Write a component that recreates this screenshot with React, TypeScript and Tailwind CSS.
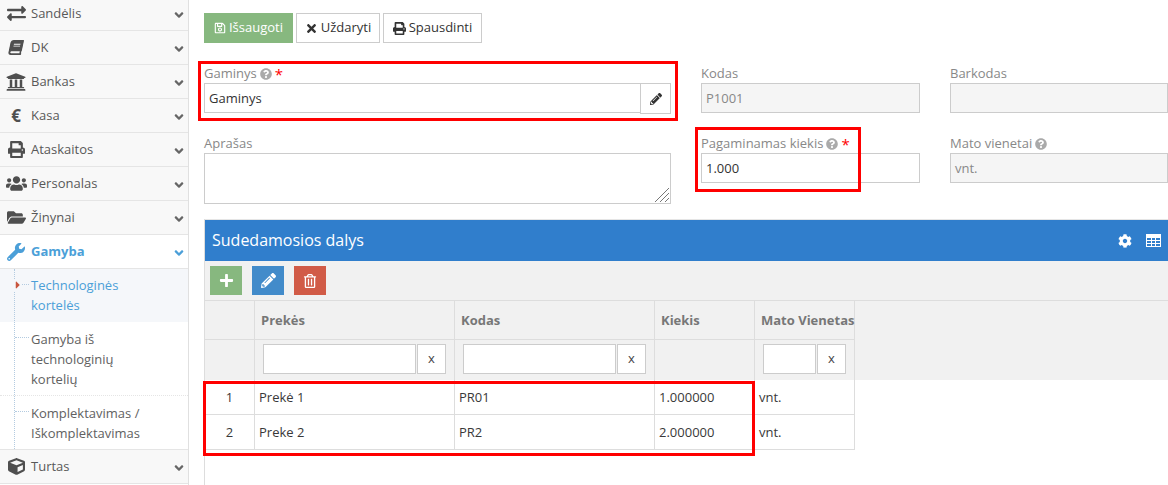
import type { ReactNode } from 'react';
import {
  FaAngleDown,
  FaBook,
  FaCaretRight,
  FaCog,
  FaCube,
  FaExchangeAlt,
  FaFolderOpen,
  FaPencilAlt,
  FaPlus,
  FaPrint,
  FaQuestionCircle,
  FaRegSave,
  FaRegTrashAlt,
  FaTimes,
  FaUniversity,
  FaUsers,
  FaWrench,
} from 'react-icons/fa';

const menuTop = [
  { label: 'Sandėlis', icon: <FaExchangeAlt className="h-[19px] w-[19px]" /> },
  { label: 'DK', icon: <FaBook className="h-[15px] w-[14px] -skew-x-12" /> },
  { label: 'Bankas', icon: <FaUniversity className="h-[20px] w-[20px]" /> },
  { label: 'Kasa', icon: <span className="text-[17px] font-bold leading-[17px]">€</span> },
  { label: 'Ataskaitos', icon: <FaPrint className="h-[17px] w-[17px]" /> },
  { label: 'Personalas', icon: <FaUsers className="h-[21px] w-[21px]" /> },
  { label: 'Žinynai', icon: <FaFolderOpen className="h-[19px] w-[19px]" /> },
];

function MenuItem({ label, icon }: { label: string; icon: ReactNode }) {
  return (
    <div className="flex h-[34px] items-center border-b border-[#e5e5e5] bg-[#f8f8f8] text-[#585858]">
      <div className="flex w-[31px] justify-center pl-px text-[#4f4f4f]">{icon}</div>
      <span className="flex-1">{label}</span>
      <FaAngleDown className="mr-[2px] mt-[2px] h-[14px] w-[14px] text-[#666]" />
    </div>
  );
}

function SubItem({ lines, active }: { lines: string[]; active?: boolean }) {
  return (
    <div
      className={`relative pl-[31px] leading-[20px] ${
        active ? 'bg-[#f5f7fa] pb-[7px] pt-[6px] text-[#4b9fd8]' : 'bg-white pb-[6px] pt-[7px] text-[#616161]'
      }`}
    >
      <span className="absolute left-[15px] top-[15px] w-[14px] border-t border-dotted border-[#b3cbe0]" />
      {active && <FaCaretRight className="absolute left-[14px] top-[10px] z-20 h-[12px] w-[8px] bg-[#f5f7fa] text-[#c8553d]" />}
      {lines.map(line => (
        <div key={line}>{line}</div>
      ))}
    </div>
  );
}

function Sidebar() {
  return (
    <aside className="w-[189px] shrink-0 border-r border-[#e0e0e0] bg-white">
      <div className="-mt-[3px]">
        {menuTop.map(item => (
          <MenuItem key={item.label} {...item} />
        ))}
      </div>
      <div className="flex h-[34px] items-center border-b border-[#e5e5e5] bg-white font-bold text-[#4b9fd8]">
        <div className="flex w-[31px] justify-center pl-px">
          <FaWrench className="h-[18px] w-[18px]" />
        </div>
        <span className="flex-1">Gamyba</span>
        <FaAngleDown className="mr-[2px] mt-[2px] h-[14px] w-[14px]" />
      </div>
      <div className="relative">
        <span className="absolute bottom-0 left-[14px] top-0 z-10 border-l border-dotted border-[#b3cbe0]" />
        <SubItem lines={['Technologinės', 'kortelės']} active />
        <SubItem lines={['Gamyba iš', 'technologinių', 'kortelių']} />
        <div className="border-t border-dotted border-[#e5e5e5]">
          <SubItem lines={['Komplektavimas /', 'Iškomplektavimas']} />
        </div>
      </div>
      <div className="border-t border-[#e5e5e5]">
        <MenuItem label="Turtas" icon={<FaCube className="h-[17px] w-[17px]" />} />
      </div>
    </aside>
  );
}

function Label({ text, help, required }: { text: string; help?: boolean; required?: boolean }) {
  return (
    <div className="flex h-[20px] items-center pt-[2px] text-[#888]">
      <span>{text}</span>
      {help && <FaQuestionCircle className="ml-[3px] h-[12px] w-[12px] text-[#aaa]" />}
      {required && <span className="ml-[3px] text-[15px] leading-[15px] text-[#f00]">*</span>}
    </div>
  );
}

function Toolbar() {
  return (
    <div className="flex gap-[3px]">
      <button className="flex h-[30px] w-[89px] items-center justify-center gap-[3px] bg-[#87b87f] text-white">
        <FaRegSave className="h-[12px] w-[12px]" />
        Išsaugoti
      </button>
      <button className="flex h-[30px] w-[84px] items-center justify-center gap-[3px] border border-[#ccc] bg-white text-[#333]">
        <FaTimes className="h-[13px] w-[13px]" />
        Uždaryti
      </button>
      <button className="flex h-[30px] w-[99px] items-center justify-center gap-[3px] border border-[#ccc] bg-white text-[#333]">
        <FaPrint className="h-[13px] w-[13px]" />
        Spausdinti
      </button>
    </div>
  );
}

function Form() {
  const ro = 'h-[30px] w-full border border-[#ccc] bg-[#f5f5f5] px-[4px] leading-[28px] text-[#888]';
  return (
    <div className="mt-[20px] grid grid-cols-[467px_219px_218px] gap-x-[30px]">
      <div className="relative">
        <span className="absolute -left-[6px] -top-[2px] h-[60px] w-[480px] border-[3px] border-[#f00]" />
        <Label text="Gaminys" help required />
        <div className="flex h-[30px]">
          <div className="flex-1 border border-[#ccc] px-[4px] leading-[28px] text-[#333]">Gaminys</div>
          <div className="-ml-px flex h-[31px] w-[31px] items-center justify-center border border-[#ccc] bg-white text-[#333]">
            <FaPencilAlt className="h-[12px] w-[12px]" />
          </div>
        </div>
      </div>
      <div>
        <Label text="Kodas" />
        <div className={ro}>P1001</div>
      </div>
      <div>
        <Label text="Barkodas" />
        <div className={ro} />
      </div>
      <div className="mt-[20px]">
        <Label text="Aprašas" />
        <div className="relative">
          <textarea className="block h-[51px] w-full resize-none border border-[#ccc] bg-white" />
          <svg className="absolute bottom-[2px] right-[2px] h-[14px] w-[14px] text-[#777]" viewBox="0 0 14 14" stroke="currentColor" strokeWidth="1">
            <path d="M0 14 14 0M5 14 14 5M10 14 14 10" />
          </svg>
        </div>
      </div>
      <div className="relative mt-[20px]">
        <span className="absolute -left-[6px] -top-[6px] h-[65px] w-[166px] border-[3px] border-[#f00]" />
        <Label text="Pagaminamas kiekis" help required />
        <div className="h-[30px] w-full border border-[#ccc] px-[4px] leading-[28px] text-[#333]">1.000</div>
      </div>
      <div className="mt-[20px]">
        <Label text="Mato vienetai" help />
        <div className={ro}>vnt.</div>
      </div>
    </div>
  );
}

const colWidths = ['w-[50px]', 'w-[200px]', 'w-[200px]', 'w-[100px]', 'w-[100px]'];

function Cell({ col, className, children }: { col: number; className?: string; children?: ReactNode }) {
  return (
    <div className={`${colWidths[col]} flex shrink-0 items-center border-b border-r border-[#ddd] ${className ?? ''}`}>
      {children}
    </div>
  );
}

function Filter({ width }: { width: string }) {
  return (
    <div className="mb-[2px] ml-[8px] flex h-[30px] gap-px">
      <div className={`${width} border border-[#ccc] bg-white`} />
      <div className="flex w-[29px] items-center justify-center border border-[#ccc] bg-white text-[#444]">x</div>
    </div>
  );
}

const rows = [
  { nr: '1', name: 'Prekė 1', code: 'PR01', qty: '1.000000', unit: 'vnt.' },
  { nr: '2', name: 'Preke 2', code: 'PR2', qty: '2.000000', unit: 'vnt.' },
];

function Grid() {
  return (
    <div className="relative mt-[15px] flex-1 border-l border-[#ddd]">
      <div className="flex h-[42px] items-center justify-between border-t border-[#e5e5e5] bg-[#307ecc] px-[7px] text-white">
        <span className="pb-[2px] text-[16px]">Sudedamosios dalys</span>
        <div className="flex items-center gap-[14px]">
          <FaCog className="h-[14px] w-[14px]" />
          <svg className="h-[13px] w-[15px]" viewBox="0 0 15 13" fill="white">
            <path d="M0 0h15v13H0zM1 4v2h4V4zm5 0v2h3V4zm4 0v2h4V4zM1 7v2h4V7zm5 0v2h3V7zm4 0v2h4V7zM1 10v2h4v-2zm5 0v2h3v-2zm4 0v2h4v-2z" fillRule="evenodd" />
          </svg>
        </div>
      </div>
      <div className="flex h-[40px] items-center gap-[10px] border-b border-[#ddd] bg-[#f1f1f1] pl-[5px]">
        <div className="flex h-[29px] w-[32px] items-center justify-center bg-[#87b87f] text-white">
          <FaPlus className="h-[15px] w-[15px]" />
        </div>
        <div className="flex h-[29px] w-[32px] items-center justify-center bg-[#428bca] text-white">
          <FaPencilAlt className="h-[15px] w-[15px]" />
        </div>
        <div className="flex h-[29px] w-[32px] items-center justify-center bg-[#d15b47] text-white">
          <FaRegTrashAlt className="h-[14px] w-[14px]" />
        </div>
      </div>
      <div className="bg-[#f1f1f1] font-bold text-[#777]">
        <div className="flex h-[39px]">
          <Cell col={0} />
          <Cell col={1} className="pl-[6px] pt-px">Prekės</Cell>
          <Cell col={2} className="pl-[6px] pt-px">Kodas</Cell>
          <Cell col={3} className="pl-[6px] pt-px">Kiekis</Cell>
          <Cell col={4} className="whitespace-nowrap pl-[6px] pt-px">Mato Vienetas</Cell>
        </div>
        <div className="flex h-[40px] font-normal">
          <Cell col={0} className="border-b-0" />
          <Cell col={1} className="border-b-0"><Filter width="w-[153px]" /></Cell>
          <Cell col={2} className="border-b-0"><Filter width="w-[153px]" /></Cell>
          <Cell col={3} className="border-b-0" />
          <Cell col={4} className="border-b-0"><Filter width="w-[53px]" /></Cell>
        </div>
      </div>
      <div className="relative text-[#393939]">
        <span className="absolute -left-[2px] top-[1px] h-[75px] w-[552px] border-[3px] border-[#f00]" />
        {rows.map(row => (
          <div key={row.nr} className="flex h-[35px]">
            <Cell col={0} className="justify-center pt-px">{row.nr}</Cell>
            <Cell col={1} className="pl-[4px] pt-px">{row.name}</Cell>
            <Cell col={2} className="pl-[4px] pt-px">{row.code}</Cell>
            <Cell col={3} className="pl-[4px] pt-px">{row.qty}</Cell>
            <Cell col={4} className="pl-[4px] pt-px">{row.unit}</Cell>
          </div>
        ))}
      </div>
    </div>
  );
}

export default function App() {
  return (
    <div className="flex h-[485px] w-[1168px] overflow-hidden bg-white font-['Open_Sans',sans-serif] text-[13px]">
      <Sidebar />
      <main className="flex min-w-0 flex-1 flex-col pl-[15px] pt-[13px]">
        <Toolbar />
        <Form />
        <Grid />
      </main>
    </div>
  );
}
